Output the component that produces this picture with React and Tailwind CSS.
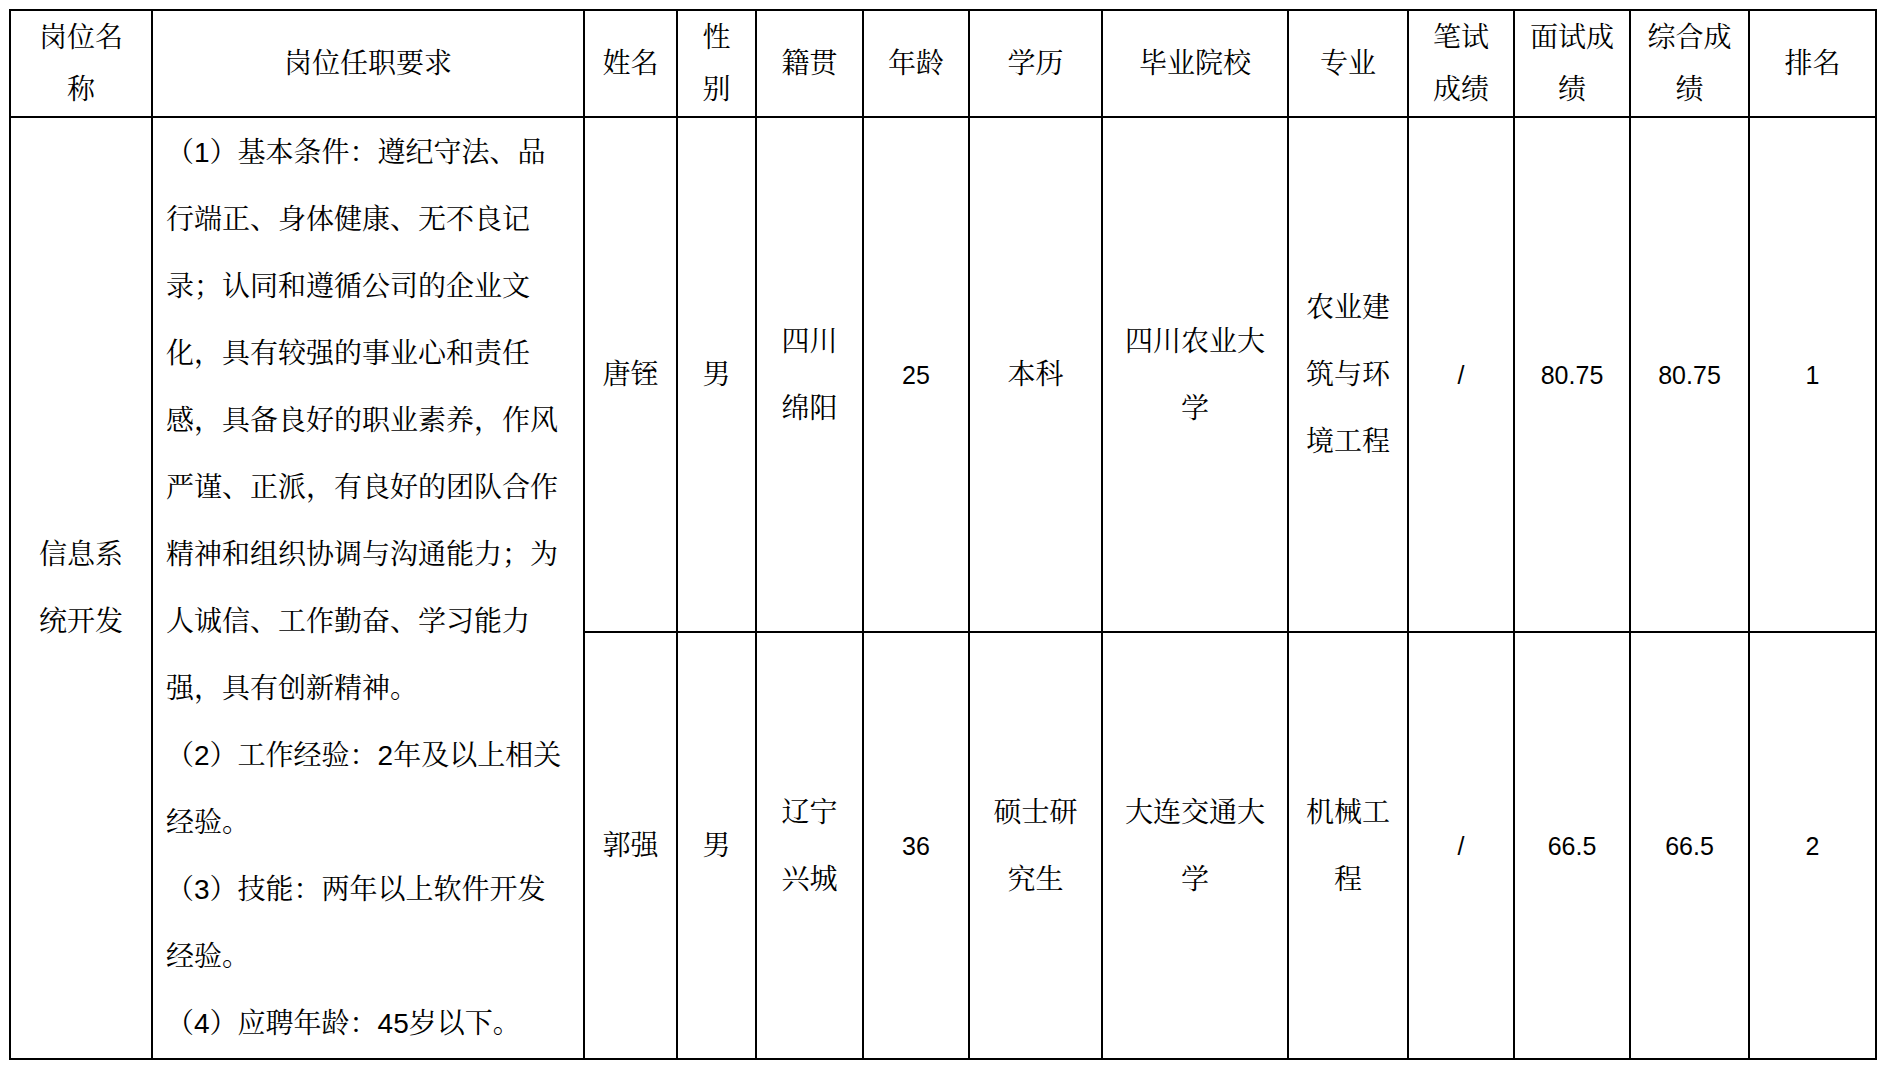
import React from 'react';

const cjk = "font-['Liberation_Sans','Noto_Serif_CJK_SC','Noto_Sans_CJK_SC',sans-serif]";

const requirements = [
    '（1）基本条件：遵纪守法、品',
    '行端正、身体健康、无不良记',
    '录；认同和遵循公司的企业文',
    '化，具有较强的事业心和责任',
    '感，具备良好的职业素养，作风',
    '严谨、正派，有良好的团队合作',
    '精神和组织协调与沟通能力；为',
    '人诚信、工作勤奋、学习能力',
    '强，具有创新精神。',
    '（2）工作经验：2年及以上相关',
    '经验。',
    '（3）技能：两年以上软件开发',
    '经验。',
    '（4）应聘年龄：45岁以下。',
];

const headers = [
    ['岗位名', '称'],
    ['岗位任职要求'],
    ['姓名'],
    ['性', '别'],
    ['籍贯'],
    ['年龄'],
    ['学历'],
    ['毕业院校'],
    ['专业'],
    ['笔试', '成绩'],
    ['面试成', '绩'],
    ['综合成', '绩'],
    ['排名'],
];

const widths = [142, 432, 93, 79, 107, 106, 133, 186, 120, 106, 116, 119, 127];

const people = [
    {
        name: '唐铚', sex: '男', origin: ['四川', '绵阳'], age: '25', edu: ['本科'],
        school: ['四川农业大', '学'], major: ['农业建', '筑与环', '境工程'],
        written: '/', interview: '80.75', total: '80.75', rank: '1', h: 'h-[515px]',
    },
    {
        name: '郭强', sex: '男', origin: ['辽宁', '兴城'], age: '36', edu: ['硕士研', '究生'],
        school: ['大连交通大', '学'], major: ['机械工', '程'],
        written: '/', interview: '66.5', total: '66.5', rank: '2', h: 'h-[427px]',
    },
];

const Lines = ({ lines }) => (
    <>
        {lines.map((l, i) => (
            <div key={i}>{l}</div>
        ))}
    </>
);

const Cell = ({ children, className = '', ...rest }) => (
    <td className={`border-2 border-black p-0 text-center align-middle ${className}`} {...rest}>
        {children}
    </td>
);

const Num = ({ children }) => (
    <span className="font-['Liberation_Sans',sans-serif] text-[25px]">{children}</span>
);

const App = () => {
    return (
        <div className={`min-h-screen bg-white pt-[9px] pl-[9px] text-black text-[28px] ${cjk}`}>
            <table className="table-fixed border-collapse w-[1866px]">
                <colgroup>
                    {widths.map((w, i) => (
                        <col key={i} style={{ width: w }} />
                    ))}
                </colgroup>
                <tbody>
                    <tr className="h-[107px]">
                        {headers.map((h, i) => (
                            <Cell key={i} className="leading-[52px]">
                                <Lines lines={h} />
                            </Cell>
                        ))}
                    </tr>
                    {people.map((p, idx) => (
                        <tr key={p.name} className={p.h}>
                            {idx === 0 && (
                                <>
                                    <Cell rowSpan={2} className="leading-[67px]">
                                        <Lines lines={['信息系', '统开发']} />
                                    </Cell>
                                    <Cell rowSpan={2} className="text-left pl-[13px] leading-[67px] whitespace-nowrap">
                                        <Lines lines={requirements} />
                                    </Cell>
                                </>
                            )}
                            <Cell className="leading-[67px]">{p.name}</Cell>
                            <Cell className="leading-[67px]">{p.sex}</Cell>
                            <Cell className="leading-[67px]"><Lines lines={p.origin} /></Cell>
                            <Cell className="leading-[67px]"><Num>{p.age}</Num></Cell>
                            <Cell className="leading-[67px]"><Lines lines={p.edu} /></Cell>
                            <Cell className="leading-[67px]"><Lines lines={p.school} /></Cell>
                            <Cell className="leading-[67px]"><Lines lines={p.major} /></Cell>
                            <Cell className="leading-[67px]"><Num>{p.written}</Num></Cell>
                            <Cell className="leading-[67px]"><Num>{p.interview}</Num></Cell>
                            <Cell className="leading-[67px]"><Num>{p.total}</Num></Cell>
                            <Cell className="leading-[67px]"><Num>{p.rank}</Num></Cell>
                        </tr>
                    ))}
                </tbody>
            </table>
        </div>
    );
};

export default App;
